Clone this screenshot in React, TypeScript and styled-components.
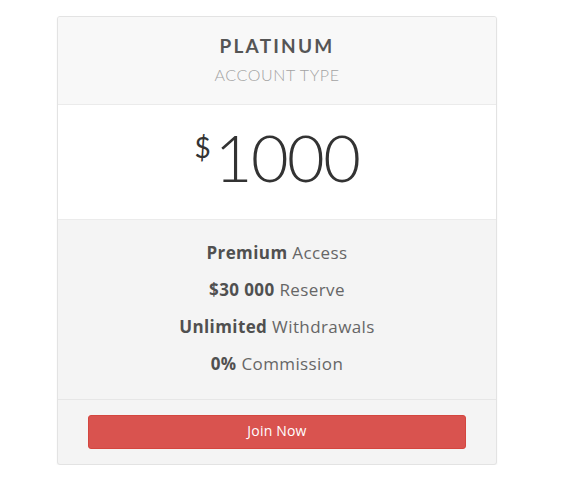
import styled, { createGlobalStyle } from 'styled-components';

const GlobalStyle = createGlobalStyle`
  body {
    margin: 0;
    background: #ffffff;
    font-family: "Open Sans", "Liberation Sans", sans-serif;
  }
`;

const features = [
  { bold: 'Premium', rest: 'Access' },
  { bold: '$30 000', rest: 'Reserve' },
  { bold: 'Unlimited', rest: 'Withdrawals' },
  { bold: '0%', rest: 'Commission' },
];

export default function App() {
  return (
    <>
      <GlobalStyle />
      <S_Page>
        <S_Card>
          <S_Header>
            <S_Title>PLATINUM</S_Title>
            <S_Subtitle>ACCOUNT TYPE</S_Subtitle>
          </S_Header>
          <S_PriceBox>
            <S_Currency>$</S_Currency>
            <S_Amount>1000</S_Amount>
          </S_PriceBox>
          <S_Features>
            {features.map((f) => (
              <S_Feature key={f.bold}>
                <strong>{f.bold}</strong> {f.rest}
              </S_Feature>
            ))}
          </S_Features>
          <S_Footer>
            <S_Button>Join Now</S_Button>
          </S_Footer>
        </S_Card>
      </S_Page>
    </>
  );
}

// ------------ styles ------------
const S_Page = styled.div`
  padding: 16px 0 0 57px;
`;

const S_Card = styled.div`
  width: 440px;
  box-sizing: border-box;
  border: 1px solid #e3e3e3;
  border-radius: 3px;
  box-shadow: 0 1px 2px rgba(0, 0, 0, 0.06);
  overflow: hidden;
  background: #f4f4f4;
`;

const S_Header = styled.div`
  height: 88px;
  box-sizing: border-box;
  padding-top: 18px;
  background: #f8f8f8;
  border-bottom: 1px solid #ebebeb;
  text-align: center;
`;

const S_Title = styled.div`
  font-family: "Lato", sans-serif;
  font-weight: 700;
  font-size: 19px;
  letter-spacing: 2.2px;
  color: #555555;
  line-height: 22px;
`;

const S_Subtitle = styled.div`
  margin-top: 8px;
  font-family: "Lato", sans-serif;
  font-weight: 300;
  font-size: 16px;
  letter-spacing: 0.6px;
  color: #a3a3a3;
  line-height: 20px;
`;

const S_PriceBox = styled.div`
  height: 115px;
  box-sizing: border-box;
  background: #ffffff;
  border-bottom: 1px solid #ebebeb;
  display: flex;
  justify-content: center;
  align-items: flex-start;
  padding-top: 14px;
  color: #333333;
`;

const S_Currency = styled.span`
  font-family: "Lato", sans-serif;
  font-weight: 400;
  font-size: 28px;
  line-height: 28px;
  margin-top: 14px;
  margin-right: 4px;
`;

const S_Amount = styled.span`
  font-family: "Lato", sans-serif;
  font-weight: 300;
  font-size: 65px;
  letter-spacing: -1.5px;
  line-height: 76px;
`;

const S_Features = styled.div`
  height: 180px;
  box-sizing: border-box;
  padding-top: 21px;
  border-bottom: 1px solid #e6e6e6;
  display: flex;
  flex-direction: column;
  align-items: center;
  gap: 14px;
`;

const S_Feature = styled.div`
  font-size: 17px;
  letter-spacing: 0.4px;
  line-height: 23px;
  color: #666666;

  strong {
    font-weight: 700;
    color: #505050;
  }
`;

const S_Footer = styled.div`
  padding: 15px 30px 15px;
`;

const S_Button = styled.button`
  display: block;
  width: 100%;
  height: 34px;
  padding: 0 0 3px;
  border: 1px solid #d4463f;
  border-radius: 3px;
  background: #d9534f;
  color: #ffffff;
  font-family: "Open Sans", sans-serif;
  font-size: 14px;
  letter-spacing: 0.2px;
  cursor: pointer;
`;
